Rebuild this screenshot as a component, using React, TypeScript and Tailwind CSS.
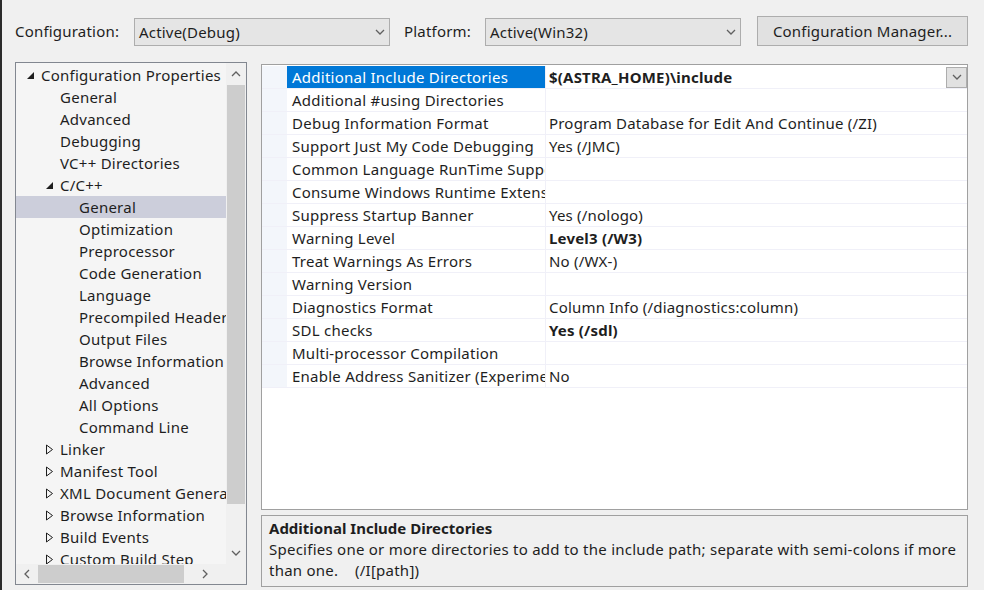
import React from 'react'

const font = { fontFamily: '"Noto Sans", "Liberation Sans", sans-serif' }

type TreeRow = {
  label: string
  level: 0 | 1 | 2
  toggle?: 'open' | 'closed'
  selected?: boolean
}

const treeRows: TreeRow[] = [
  { label: 'Configuration Properties', level: 0, toggle: 'open' },
  { label: 'General', level: 1 },
  { label: 'Advanced', level: 1 },
  { label: 'Debugging', level: 1 },
  { label: 'VC++ Directories', level: 1 },
  { label: 'C/C++', level: 1, toggle: 'open' },
  { label: 'General', level: 2, selected: true },
  { label: 'Optimization', level: 2 },
  { label: 'Preprocessor', level: 2 },
  { label: 'Code Generation', level: 2 },
  { label: 'Language', level: 2 },
  { label: 'Precompiled Headers', level: 2 },
  { label: 'Output Files', level: 2 },
  { label: 'Browse Information', level: 2 },
  { label: 'Advanced', level: 2 },
  { label: 'All Options', level: 2 },
  { label: 'Command Line', level: 2 },
  { label: 'Linker', level: 1, toggle: 'closed' },
  { label: 'Manifest Tool', level: 1, toggle: 'closed' },
  { label: 'XML Document Generator', level: 1, toggle: 'closed' },
  { label: 'Browse Information', level: 1, toggle: 'closed' },
  { label: 'Build Events', level: 1, toggle: 'closed' },
  { label: 'Custom Build Step', level: 1, toggle: 'closed' },
]

type Prop = { name: string; value?: string; bold?: boolean }

const props: Prop[] = [
  { name: 'Additional Include Directories', value: '$(ASTRA_HOME)\\include', bold: true },
  { name: 'Additional #using Directories' },
  { name: 'Debug Information Format', value: 'Program Database for Edit And Continue (/ZI)' },
  { name: 'Support Just My Code Debugging', value: 'Yes (/JMC)' },
  { name: 'Common Language RunTime Support' },
  { name: 'Consume Windows Runtime Extension' },
  { name: 'Suppress Startup Banner', value: 'Yes (/nologo)' },
  { name: 'Warning Level', value: 'Level3 (/W3)', bold: true },
  { name: 'Treat Warnings As Errors', value: 'No (/WX-)' },
  { name: 'Warning Version' },
  { name: 'Diagnostics Format', value: 'Column Info (/diagnostics:column)' },
  { name: 'SDL checks', value: 'Yes (/sdl)', bold: true },
  { name: 'Multi-processor Compilation' },
  { name: 'Enable Address Sanitizer (Experimental)', value: 'No' },
]

function Chevron({ dir = 'down', className = '' }: { dir?: 'down' | 'up' | 'left' | 'right'; className?: string }) {
  const d = {
    down: 'M1 3 L5 7 L9 3',
    up: 'M1 7 L5 3 L9 7',
    left: 'M7 1 L3 5 L7 9',
    right: 'M3 1 L7 5 L3 9',
  }[dir]
  return (
    <svg width="10" height="10" viewBox="0 0 10 10" className={className}>
      <path d={d} fill="none" stroke="currentColor" strokeWidth="1.3" />
    </svg>
  )
}

function Combo({ text }: { text: string }) {
  return (
    <div className="w-[256px] h-[28px] bg-[#e5e5e5] border border-[#adadad] flex items-center justify-between pl-[4px] pr-[4px] text-[15px] text-[#1e1e1e]">
      <span>{text}</span>
      <Chevron className="text-[#606060]" />
    </div>
  )
}

function Toggle({ kind }: { kind: 'open' | 'closed' }) {
  if (kind === 'open') {
    return (
      <svg width="9" height="9" viewBox="0 0 9 9">
        <path d="M8 1 L8 8 L1 8 Z" fill="#1e1e1e" />
      </svg>
    )
  }
  return (
    <svg width="9" height="11" viewBox="0 0 9 11">
      <path d="M1.5 1 L7.5 5.5 L1.5 10 Z" fill="none" stroke="#1e1e1e" strokeWidth="1" />
    </svg>
  )
}

function Tree() {
  return (
    <div className="w-[232px] h-[523px] border border-[#828790] bg-[#f5f5f5] flex flex-col mt-[16px]">
      <div className="flex flex-1 min-h-0">
        <div className="w-[210px] overflow-hidden pt-[1px]">
          {treeRows.map((r, i) => {
            const indent = r.level === 0 ? 'pl-[10px]' : r.level === 1 ? 'pl-[29px]' : 'pl-[48px]'
            return (
              <div
                key={i}
                className={`h-[22px] flex items-center whitespace-nowrap text-[15px] tracking-[0.25px] text-[#1e1e1e] ${indent} ${r.selected ? 'bg-[#cccedb]' : ''}`}
              >
                <span className="w-[15px] shrink-0 flex items-center">
                  {r.toggle && <Toggle kind={r.toggle} />}
                </span>
                <span>{r.label}</span>
              </div>
            )
          })}
        </div>
        <div className="w-[20px] bg-[#f0f0f0] flex flex-col items-center">
          <div className="h-[22px] flex items-center text-[#606060]">
            <Chevron dir="up" />
          </div>
          <div className="w-[18px] h-[419px] bg-[#cdcdcd]" />
          <div className="flex-1 flex items-end pb-[6px] text-[#606060]">
            <Chevron dir="down" />
          </div>
        </div>
      </div>
      <div className="h-[20px] flex">
        <div className="w-[210px] bg-[#f0f0f0] flex items-center">
          <div className="w-[22px] flex justify-center text-[#606060]">
            <Chevron dir="left" />
          </div>
          <div className="w-[146px] h-[18px] bg-[#cdcdcd]" />
          <div className="flex-1 flex justify-center text-[#606060]">
            <Chevron dir="right" />
          </div>
        </div>
        <div className="w-[20px] bg-[#f0f0f0]" />
      </div>
    </div>
  )
}

function Grid() {
  return (
    <div className="w-[707px] h-[446px] border border-[#a0a0a0] bg-white pt-[1px]">
      {props.map((p, i) => {
        const sel = i === 0
        return (
          <div key={i} className="h-[23px] flex border-b border-[#f0f0f8]">
            <div className="w-[25px] bg-[#f3f6fb]" />
            <div
              className={`w-[259px] pl-[5px] flex items-center whitespace-nowrap overflow-hidden text-[15px] tracking-[0.25px] border-r border-[#f0f0f8] ${sel ? 'bg-[#0078d7] text-white' : 'text-[#1e1e1e]'}`}
            >
              {p.name}
            </div>
            <div className={`flex-1 pl-[3px] flex items-center justify-between text-[15px] tracking-[0.2px] text-[#1e1e1e] ${p.bold ? 'font-bold' : ''}`}>
              <span>{p.value ?? ''}</span>
              {sel && (
                <div className="w-[21px] h-[21px] bg-[#e1e1e1] border border-[#adadad] flex items-center justify-center text-[#606060]">
                  <Chevron />
                </div>
              )}
            </div>
          </div>
        )
      })}
    </div>
  )
}

export default function App() {
  return (
    <div className="w-[984px] h-[590px] bg-[#f0f0f0] border-l-2 border-[#2b2b2b] overflow-hidden" style={font}>
      {/* Top bar */}
      <div className="flex items-end pt-[16px] pl-[13px] h-[46px] text-[15px] tracking-[0.2px] text-[#1e1e1e]">
        <span className="mb-[4px] w-[119px]">Configuration:</span>
        <Combo text="Active(Debug)" />
        <span className="mb-[4px] ml-[14px] w-[81px]">Platform:</span>
        <Combo text="Active(Win32)" />
        <button className="ml-[16px] w-[211px] h-[30px] bg-[#e1e1e1] border border-[#adadad] text-[15px] text-[#1e1e1e]">
          Configuration Manager...
        </button>
      </div>

      <div className="flex pl-[13px]">
        <Tree />
        <div className="ml-[14px] mt-[18px] flex flex-col">
          <Grid />
          <div className="mt-[5px] w-[707px] h-[72px] border border-[#a0a0a0] bg-[#f0f0f0] pl-[7px] pr-[4px] pt-[2px] text-[15px] text-[#1e1e1e] leading-[21px]">
            <div className="font-bold">Additional Include Directories</div>
            <div className="tracking-[0.25px]">
              Specifies one or more directories to add to the include path; separate with semi-colons if more than one.{'\u00a0\u00a0\u00a0 '}(/I[path])
            </div>
          </div>
        </div>
      </div>
    </div>
  )
}
